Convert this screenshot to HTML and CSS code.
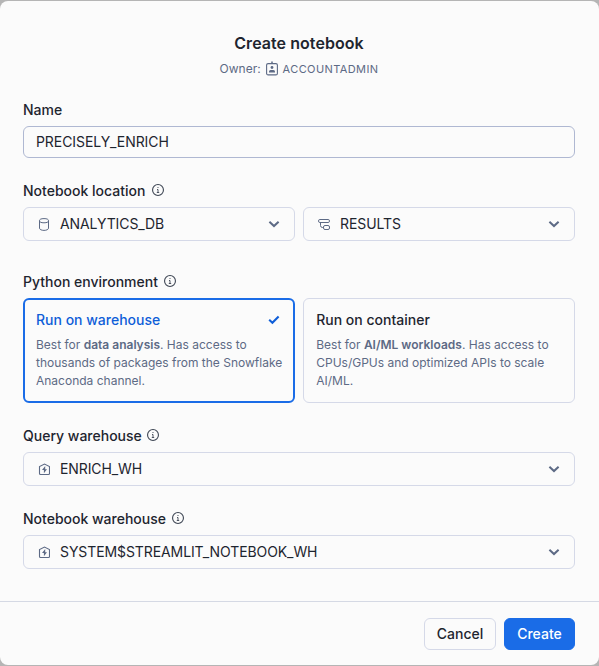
FILE: index.html
```html
<!DOCTYPE html>
<html lang="en">
<head>
<meta charset="utf-8">
<title>Create notebook</title>
<link rel="stylesheet" href="styles.css">
</head>
<body>
<svg class="defs" aria-hidden="true">
  <symbol id="info" viewBox="0 0 12 12"><circle cx="6" cy="6" r="5.450" fill="none" stroke="currentColor" stroke-width="1.100"/><path d="M5 5.500h1V8.500M4.800 8.500h2.400" fill="none" stroke="currentColor" stroke-width=".9"/><circle cx="6" cy="3.500" r=".6" fill="currentColor"/></symbol>
  <symbol id="chevron" viewBox="0 0 12 12"><path d="M1.400 3.800 6 8.100l4.600-4.300" fill="none" stroke="currentColor" stroke-width="2"/></symbol>
  <symbol id="warehouse" viewBox="0 0 12 13"><path d="M2.500 11.500a1 1 0 0 1-1-1V3.500L6.500 1l5 2.500v7a1 1 0 0 1-1 1z" fill="none" stroke="currentColor" stroke-width="1.100"/><path d="M7.200 3 4 7h1.900v3.300L9 6.200H7.200z" fill="currentColor"/></symbol>
</svg>
<main class="dialog">
  <header class="head">
    <h1>Create notebook</h1>
    <div class="owner"><span>Owner:</span>
      <svg class="badge" viewBox="0 0 12 15" fill="none" stroke="currentColor"><rect x=".6" y="2.600" width="10.800" height="11.300" rx="1.500" stroke-width="1.100"/><path d="M6 .5v2.500" stroke-width="1.500"/><circle cx="6" cy="6.500" r="1.400" fill="currentColor" stroke="none"/><path d="M3 11.500V10.500C3 9.300 4.300 8.900 6 8.900s3 .4 3 1.600v1z" fill="currentColor" stroke="none"/></svg>
      <span class="role">ACCOUNTADMIN</span></div>
  </header>
  <form class="body">
    <section class="field">
      <label class="label" for="name">Name</label>
      <input id="name" class="input" type="text" value="PRECISELY_ENRICH">
    </section>
    <section class="field location">
      <div class="label">Notebook location <svg class="info"><use href="#info"/></svg></div>
      <div class="pair">
        <div class="select"><svg class="icon" viewBox="0 0 12 13" fill="none" stroke="currentColor"><ellipse cx="6" cy="2.700" rx="4.500" ry="2.100"/><path d="M1.500 2.700v7.500c0 1.200 2 2.200 4.500 2.200s4.500-1 4.500-2.200V2.700"/></svg><span>ANALYTICS_DB</span><svg class="chevron"><use href="#chevron"/></svg></div>
        <div class="select"><svg class="icon" viewBox="0 0 12 13" fill="none" stroke="currentColor"><rect x=".5" y="1.500" width="11" height="3" rx="1.400"/><path d="M2.500 4.500v3a2 2 0 0 0 2 2h1"/><rect x="5.500" y="7.500" width="6" height="4" rx="1.500"/></svg><span>RESULTS</span><svg class="chevron"><use href="#chevron"/></svg></div>
      </div>
    </section>
    <section class="field environment">
      <div class="label">Python environment <svg class="info"><use href="#info"/></svg></div>
      <div class="pair">
        <div class="card selected">
          <h2>Run on warehouse <svg class="check" viewBox="0 0 12 12"><path d="m1.200 5.800 3.200 2.900 6.200-6.200" fill="none" stroke="currentColor" stroke-width="2.100"/></svg></h2>
          <p>Best for <b>data analysis</b>. Has access to<br>thousands of packages from the Snowflake<br>Anaconda channel.</p>
        </div>
        <div class="card">
          <h2>Run on container</h2>
          <p>Best for <b>AI/ML workloads</b>. Has access to<br>CPUs/GPUs and optimized APIs to scale<br>AI/ML.</p>
        </div>
      </div>
    </section>
    <section class="field query">
      <div class="label">Query warehouse <svg class="info"><use href="#info"/></svg></div>
      <div class="select"><svg class="icon"><use href="#warehouse"/></svg><span>ENRICH_WH</span><svg class="chevron"><use href="#chevron"/></svg></div>
    </section>
    <section class="field notebook">
      <div class="label">Notebook warehouse <svg class="info"><use href="#info"/></svg></div>
      <div class="select"><svg class="icon"><use href="#warehouse"/></svg><span>SYSTEM$STREAMLIT_NOTEBOOK_WH</span><svg class="chevron"><use href="#chevron"/></svg></div>
    </section>
  </form>
  <footer class="foot">
    <button class="button" type="button">Cancel</button>
    <button class="button primary" type="button">Create</button>
  </footer>
</main>
</body>
</html>
```
FILE: styles.css
```css
* { box-sizing: border-box; }
body {
  margin: 0;
  height: 666px;
  padding: 1px 0;
  background: #b5b5b5;
  color: #1e252f;
  font: 14px/20px Inter, "Liberation Sans", sans-serif;
}
.defs { display: none; }
svg { flex: none; }
.dialog {
  display: flex;
  flex-direction: column;
  height: 664px;
  background: #fbfbfb;
  border-radius: 8px;
}
.head { padding: 32px 1px 0 0; text-align: center; }
h1 { margin: 0; font-size: 16px; font-weight: 600; line-height: 20px; letter-spacing: .06px; }
.owner {
  display: flex;
  justify-content: center;
  align-items: center;
  margin-top: 7px;
  height: 18px;
  font-size: 12px;
  line-height: 18px;
  color: #5d6a85;
}
.badge { width: 12px; height: 15px; margin: -1px 5px 0 5px; }
.role { font-size: 11px; letter-spacing: .4px; }
.body { padding: 22px 24px 0 23px; }
.label {
  display: flex;
  align-items: center;
  gap: 6px;
  height: 20px;
  margin-bottom: 6px;
  font-weight: 500;
}
.info { width: 12px; height: 12px; margin-top: -2px; color: #3c4452; }
.location .info { margin-left: 1px; }
.query .info { margin-left: -1px; }
.input {
  display: block;
  width: 100%;
  height: 32px;
  padding: 0 12px 2px;
  border: 1px solid #afb8d2;
  border-radius: 6px;
  background: #fbfbfb;
  color: inherit;
  font: inherit;
  letter-spacing: -.07px;
  outline: none;
}
.location { margin-top: 23px; }
.environment { margin-top: 31px; }
.query, .notebook { margin-top: 23px; }
.pair { display: grid; grid-template-columns: 1fr 1fr; gap: 8px; }
.select {
  display: flex;
  align-items: center;
  height: 34px;
  padding: 0 14px;
  border: 1px solid #d5d9e8;
  border-radius: 6px;
  letter-spacing: -.09px;
}
.icon { width: 12px; height: 13px; margin-right: 10px; color: #5d6a85; }
.chevron { width: 12px; height: 12px; margin-left: auto; color: #5d6a85; }
.card {
  height: 105px;
  padding: 11px 12px;
  border: 1px solid #d5d9e8;
  border-radius: 6px;
}
.card.selected { padding: 10px 11px; border: 2px solid #1a6ce7; }
h2 { display: flex; justify-content: space-between; align-items: center; margin: 0; font-size: 14px; font-weight: 500; line-height: 20px; }
.selected h2 { color: #0f5ed8; }
.check { width: 12px; height: 12px; margin-right: 2px; }
p { margin: 6px 0 0; color: #5d6a85; font-size: 12px; line-height: 18px; white-space: nowrap; }
b { font-weight: 600; }
.foot {
  display: flex;
  justify-content: flex-end;
  gap: 8px;
  margin-top: auto;
  height: 64px;
  padding: 16px 24px 0;
  border-top: 1px solid #d5d9e4;
}
.button {
  height: 32px;
  width: 72px;
  padding: 0;
  border: 1px solid #d5d9e8;
  border-radius: 6px;
  background: #fbfbfb;
  color: inherit;
  font: inherit;
  font-weight: 500;
}
.primary { width: 71px; border-color: #1a6ce7; background: #1a6ce7; color: #fff; }
```
